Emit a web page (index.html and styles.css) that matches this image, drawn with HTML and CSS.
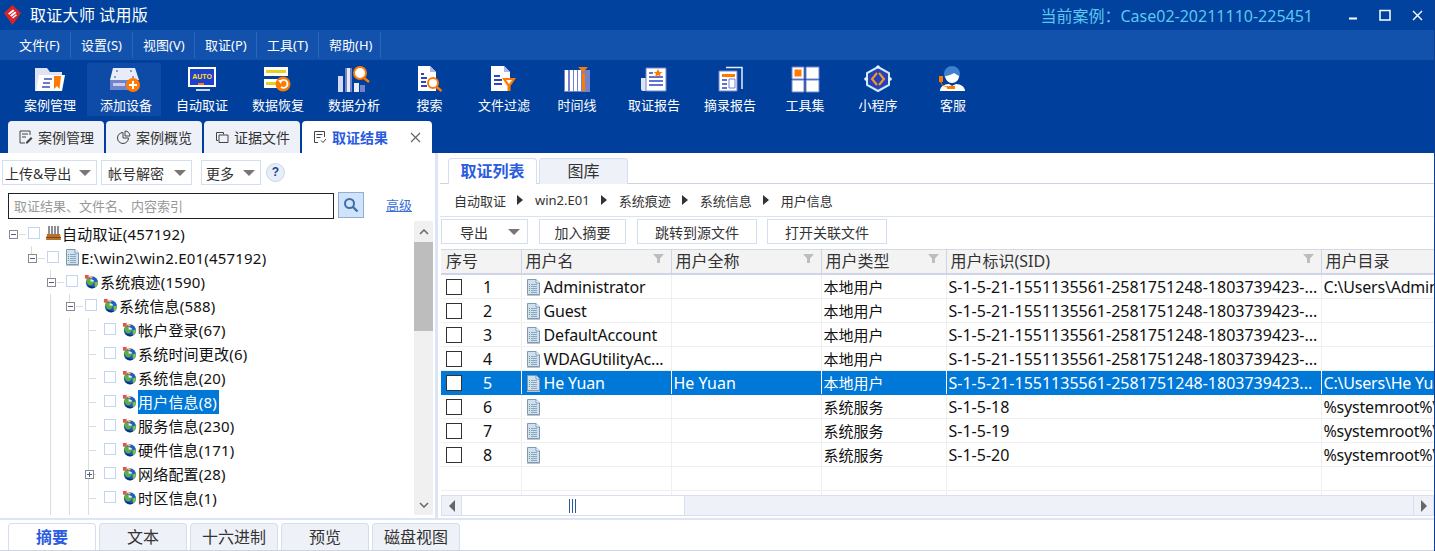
FILE: index.html
```html
<!DOCTYPE html>
<html lang="zh-CN">
<head>
<meta charset="utf-8">
<title>取证大师 试用版</title>
<link rel="stylesheet" href="styles.css">
</head>
<body>
<svg class="defs" width="0" height="0" aria-hidden="true">
  <symbol id="doc" viewBox="0 0 15 18">
    <path d="M1.5 1.5h8.5l3.5 3.5v11.500h-12z" fill="#cfe0ee" stroke="#7f99b4"/>
    <path d="M10 1.500v3.500h3.500" fill="#fff" stroke="#7f99b4"/>
    <path d="M5 6.500h6M5 8.500h6M5 10.500h6M5 12.500h6M5 14.500h6" stroke="#8aa6c0"/>
    <path d="M3 6.500h1M3 8.500h1M3 10.500h1M3 12.500h1" stroke="#5aa86a"/>
    <path d="M1 17.500h13" stroke="#c5c5c5"/>
  </symbol>
  <symbol id="globe" viewBox="0 0 16 16">
    <circle cx="8.500" cy="9" r="6.500" fill="#1f5fc4"/>
    <path d="M4 4.500c3 0 5 1 6 3s-1 4-3 4.500-3-2-4-3-1-3 1-4.500z" fill="#5fb03a"/>
    <path d="M11 9l3.500-1 .5 3-3 3z" fill="#7cc242"/>
    <path d="M3 12a7 7 0 0 0 9 2.500l-2-1z" fill="#0e2f70"/>
    <path d="M1 1h4v4H1z" fill="#e2574c"/>
    <path d="M6 2h3v2.500H6z" fill="#f4b183"/>
    <path d="M7 5.500c2 .5 4 1 4 2.500H7z" fill="#e6f0fa"/>
  </symbol>
  <symbol id="funnel" viewBox="0 0 11 9">
    <path d="M0 0h11L7 4.500V9H4V4.500z" fill="#bdbdbd"/>
  </symbol>
</svg>

<header class="titlebar">
  <svg class="logo" width="17" height="20" viewBox="0 0 17 20"><path d="M8.500 0l8.500 8-8.500 12L0 8z" fill="#d8232a"/><path d="M4 8.500l5-4 1.500 1.200-5 4zM6 10.500l5-4 1.500 1.200-5 4zM8 12.500l4-3.200 1 1-4 3.200z" fill="#fff"/></svg>
  <span class="app-name">取证大师 试用版</span>
  <span class="case-name">当前案例：Case02-20211110-225451</span>
  <div class="win-controls">
    <svg width="9" height="10" viewBox="0 0 9 10"><path d="M0 8.500h8" stroke="#fff" stroke-width="2"/></svg>
    <svg width="12" height="12" viewBox="0 0 12 12"><path d="M1 1.500h10v9.500H1z" fill="none" stroke="#fff" stroke-width="1.500"/></svg>
    <svg width="11" height="11" viewBox="0 0 11 11"><path d="M1 1l9 9M10 1l-9 9" stroke="#fff" stroke-width="1.400"/></svg>
  </div>
</header>

<nav class="menubar">
  <span class="menu-item">文件(F)</span><span class="menu-item">设置(S)</span><span class="menu-item">视图(V)</span><span class="menu-item">取证(P)</span><span class="menu-item">工具(T)</span><span class="menu-item">帮助(H)</span>
</nav>

<div class="toolbar">
  <div class="tool">
    <svg width="32" height="28" viewBox="0 0 32 28"><path d="M1 3h12l3 4h12v3H8L5 26H1z" fill="#dfe3f5"/><path d="M5 10h26l-3 16H2z" fill="#fff"/><path d="M10 14h8M9 18h7M8 22h8" stroke="#3f51b5" stroke-width="1.600"/><path d="M20 11h7l-1.500 13-2.500-3-3 3z" fill="#ff7a00"/></svg>
    <span>案例管理</span>
  </div>
  <div class="tool active">
    <svg width="32" height="28" viewBox="0 0 32 28"><path d="M3 3h22l4 12H0z" fill="#e8ebf8"/><path d="M0 15h26v10H0z" fill="#7283cc"/><path d="M3 18h12v3H3z" fill="#c7cff0"/><circle cx="7" cy="6" r="1" fill="#6f80c8"/><circle cx="21" cy="6" r="1" fill="#6f80c8"/><circle cx="5" cy="12" r="1" fill="#6f80c8"/><circle cx="23" cy="12" r="1" fill="#6f80c8"/><circle cx="23" cy="20" r="7" fill="#ff7a00"/><path d="M19 20h8M23 16v8" stroke="#fff" stroke-width="2"/></svg>
    <span>添加设备</span>
  </div>
  <div class="tool">
    <svg width="32" height="28" viewBox="0 0 32 28"><path d="M2 2h28v20H2z" fill="#fff"/><path d="M4 4h24v16H4z" fill="#1e3fd0"/><text x="16" y="13.500" class="auto">AUTO</text><path d="M12 18h6v2h-6z" fill="#ff7a00"/><path d="M10 24h14v2H10z" fill="#cfd6f2"/></svg>
    <span>自动取证</span>
  </div>
  <div class="tool">
    <svg width="32" height="28" viewBox="0 0 32 28"><path d="M2 2h24v9H2zM2 14h18v9H2z" fill="#fff"/><path d="M4 5h20v3H4zM4 17h14v3H4z" fill="#e6d21c"/><circle cx="21" cy="19" r="7.500" fill="#ff7a00"/><path d="M18 17a4 4 0 1 1 1 5" fill="none" stroke="#fff" stroke-width="1.800"/><path d="M16 15l4 0-1 4z" fill="#fff"/></svg>
    <span>数据恢复</span>
  </div>
  <div class="tool">
    <svg width="32" height="28" viewBox="0 0 32 28"><path d="M0 11h5v16H0z" fill="#d4d9f3"/><path d="M7 3h7v24H7z" fill="#7283cc"/><path d="M9 3h3v24H9z" fill="#e8ebf8"/><path d="M16 18h5v9h-5z" fill="#e8ebf8"/><path d="M22 20h5v7h-5z" fill="#7283cc"/><circle cx="22" cy="8" r="6" fill="#fff" stroke="#ff7a00" stroke-width="2"/><path d="M26 13l5 4" stroke="#ff7a00" stroke-width="2.400"/></svg>
    <span>数据分析</span>
  </div>
  <div class="tool">
    <svg width="32" height="28" viewBox="0 0 32 28"><path d="M4 1h12l6 6v19H4z" fill="#fff"/><path d="M16 1v6h6z" fill="#aeb8e6"/><path d="M7 9h3M7 13h6M7 17h5M7 21h6" stroke="#2f45c4" stroke-width="1.800"/><circle cx="19" cy="18" r="5" fill="#fff" stroke="#ff7a00" stroke-width="2"/><path d="M22.500 22l5 4" stroke="#ff7a00" stroke-width="2.400"/></svg>
    <span>搜索</span>
  </div>
  <div class="tool">
    <svg width="32" height="28" viewBox="0 0 32 28"><path d="M3 1h13l6 6v19H3z" fill="#fff"/><path d="M16 1v6h6z" fill="#aeb8e6"/><path d="M6 11h6M6 15h8M6 19h8" stroke="#2f45c4" stroke-width="1.800"/><path d="M14 13h14l-5.500 8v5h-3v-5z" fill="#ff7a00"/><path d="M18 15h6l-3 4z" fill="#fff"/></svg>
    <span>文件过滤</span>
  </div>
  <div class="tool">
    <svg width="32" height="28" viewBox="0 0 32 28"><path d="M3 5h26v22H3z" fill="#7283cc"/><path d="M4 5h3v21H4zM9 5h3v21H9zM13 5h3v21h-3zM17 5h3v21h-3z" fill="#fff"/><path d="M21 8h3v18h-3z" fill="#ff7a00"/><path d="M17 2h10l-5 5z" fill="#ff7a00"/></svg>
    <span>时间线</span>
  </div>
  <div class="tool">
    <svg width="32" height="28" viewBox="0 0 32 28"><path d="M3 13h6v13H5a2 2 0 0 1-2-2z" fill="#dfe3f5"/><path d="M8 3h20v23H8z" fill="#fff" stroke="#7283cc"/><path d="M11 8h4M11 12h14M11 16h14M11 20h14" stroke="#2f45c4" stroke-width="1.600"/><path d="M20 4l1.500 3h3l-2.500 2 1 3-3-2-3 2 1-3-2.500-2h3z" fill="#ff7a00"/></svg>
    <span>取证报告</span>
  </div>
  <div class="tool">
    <svg width="32" height="28" viewBox="0 0 32 28"><path d="M12 2.500h16V24" fill="none" stroke="#e8ebf8" stroke-width="1.500"/><path d="M5 6h18v20H5z" fill="#fff" stroke="#7283cc"/><path d="M8 9h13v3H8z" fill="#ff7a00"/><path d="M15 14h6v9h-6z" fill="#fff" stroke="#7283cc"/><path d="M8 15h5M8 19h5M8 23h5" stroke="#2f45c4" stroke-width="1.600"/></svg>
    <span>摘录报告</span>
  </div>
  <div class="tool">
    <svg width="32" height="28" viewBox="0 0 32 28"><path d="M3 2h12v12H3zM17 2h13v12H17zM3 15h12v12H3zM17 15h13v12H17z" fill="#fff" stroke="#7283cc"/><path d="M5.500 4.500h7v7h-7z" fill="#ff7a00"/></svg>
    <span>工具集</span>
  </div>
  <div class="tool">
    <svg width="32" height="28" viewBox="0 0 32 28"><path d="M16 2l11 6v12l-11 6-11-6V8z" fill="#2a3fb8" stroke="#cdeefa" stroke-width="2"/><circle cx="16" cy="1.800" r="1.600" fill="#e8f8ff"/><circle cx="4" cy="14" r="1.800" fill="#e8f8ff"/><circle cx="28" cy="14" r="1.800" fill="#e8f8ff"/><path d="M15 8l-5 6 5 6M17 8l5 6-5 6" fill="none" stroke="#f0a020" stroke-width="2"/></svg>
    <span>小程序</span>
  </div>
  <div class="tool">
    <svg width="32" height="28" viewBox="0 0 32 28"><circle cx="15" cy="9" r="8" fill="#3e7fcf"/><path d="M8 11c3 0 7-2 9-3l5 3c0 4-3 7-7 7s-6-3-7-7z" fill="#fff"/><path d="M3 26c0-4 4-7 9-7l3 2 4-2c5 0 9 3 9 7z" fill="#fff"/><path d="M2 11h4v6H2z" fill="#ff7a00"/><path d="M4 17c0 3 3 4 6 5" fill="none" stroke="#ff7a00"/><path d="M10 21h8v3h-8z" fill="#ff7a00"/></svg>
    <span>客服</span>
  </div>
</div>

<div class="tabs-top">
  <div class="top-tab">
    <svg width="14" height="14" viewBox="0 0 14 14"><path d="M11 5V1H1v12h5M3 4h6M3 7h4" fill="none" stroke="#444"/><path d="M7 12l5-5 1.500 1.500-5 5H7z" fill="#444"/></svg>
    <span>案例管理</span>
  </div>
  <div class="top-tab">
    <svg width="14" height="14" viewBox="0 0 14 14"><path d="M6 2.500a5.500 5.500 0 1 0 5.500 5.500H6z" fill="none" stroke="#444"/><path d="M8 1a5 5 0 0 1 5 5H8z" fill="none" stroke="#444"/></svg>
    <span>案例概览</span>
  </div>
  <div class="top-tab">
    <svg width="14" height="14" viewBox="0 0 14 14"><path d="M3 10.500H1.500v-8h7v2" fill="none" stroke="#444"/><path d="M4 5h9v7.500H4z" fill="none" stroke="#444"/></svg>
    <span>证据文件</span>
  </div>
  <div class="top-tab current">
    <svg width="14" height="14" viewBox="0 0 14 14"><path d="M5 12.500H1.500v-11h10V7M3.500 4.500h6M3.500 7.500h4" fill="none" stroke="#444"/><path d="M8 10.500l2 2 3-3.500" fill="none" stroke="#444"/></svg>
    <span class="tab-strong">取证结果</span>
    <svg class="tab-close" width="11" height="11" viewBox="0 0 11 11"><path d="M1 1l9 9M10 1l-9 9" stroke="#666" stroke-width="1.200"/></svg>
  </div>
</div>

<main class="workspace">
  <section class="left">
    <div class="left-tools">
      <button class="dd dd-upload"><span>上传&amp;导出</span><i class="caret"></i></button>
      <button class="dd dd-account"><span>帐号解密</span><i class="caret"></i></button>
      <button class="dd dd-more"><span>更多</span><i class="caret"></i></button>
      <span class="help">?</span>
    </div>
    <div class="search-row">
      <div class="search-box">取证结果、文件名、内容索引</div>
      <div class="search-btn"><svg width="16" height="16" viewBox="0 0 16 16"><circle cx="6.500" cy="6.500" r="4.500" fill="none" stroke="#3f6ea8" stroke-width="2"/><path d="M10 10l4.500 4.500" stroke="#3f6ea8" stroke-width="2.400"/></svg></div>
      <a class="adv">高级</a>
    </div>
    <div class="tree-wrap">
      <div class="tree">
        <div class="row lv0"><i class="exp"></i><i class="cb"></i><svg class="ico" width="15" height="16" viewBox="0 0 15 16"><path d="M2 1h2v9H2zM5 1h2v9H5zM8 1h2v9H8zM11 1h2v9h-2z" fill="#8c8f96"/><path d="M1 9h13l1 6H0z" fill="#b4702c"/><path d="M0 12h15v1H0z" fill="#7c4a18"/></svg><span class="lbl">自动取证(457192)</span></div>
        <div class="row lv1"><i class="exp"></i><i class="cb"></i><svg class="ico" width="15" height="18"><use href="#doc"/></svg><span class="lbl">E:\win2\win2.E01(457192)</span></div>
        <div class="row lv2"><i class="exp"></i><i class="cb"></i><svg class="ico" width="15" height="15"><use href="#globe"/></svg><span class="lbl">系统痕迹(1590)</span></div>
        <div class="row lv3"><i class="exp"></i><i class="cb"></i><svg class="ico" width="15" height="15"><use href="#globe"/></svg><span class="lbl">系统信息(588)</span></div>
        <div class="row lv4"><i class="noexp"></i><i class="cb"></i><svg class="ico" width="15" height="15"><use href="#globe"/></svg><span class="lbl">帐户登录(67)</span></div>
        <div class="row lv4"><i class="noexp"></i><i class="cb"></i><svg class="ico" width="15" height="15"><use href="#globe"/></svg><span class="lbl">系统时间更改(6)</span></div>
        <div class="row lv4"><i class="noexp"></i><i class="cb"></i><svg class="ico" width="15" height="15"><use href="#globe"/></svg><span class="lbl">系统信息(20)</span></div>
        <div class="row lv4"><i class="noexp"></i><i class="cb"></i><svg class="ico" width="15" height="15"><use href="#globe"/></svg><span class="lbl picked">用户信息(8)</span></div>
        <div class="row lv4"><i class="noexp"></i><i class="cb"></i><svg class="ico" width="15" height="15"><use href="#globe"/></svg><span class="lbl">服务信息(230)</span></div>
        <div class="row lv4"><i class="noexp"></i><i class="cb"></i><svg class="ico" width="15" height="15"><use href="#globe"/></svg><span class="lbl">硬件信息(171)</span></div>
        <div class="row lv4"><i class="exp plus"></i><i class="cb"></i><svg class="ico" width="15" height="15"><use href="#globe"/></svg><span class="lbl">网络配置(28)</span></div>
        <div class="row lv4"><i class="noexp"></i><i class="cb"></i><svg class="ico" width="15" height="15"><use href="#globe"/></svg><span class="lbl">时区信息(1)</span></div>
        <div class="row lv4"><i class="noexp"></i><i class="cb"></i><svg class="ico" width="15" height="15"><use href="#globe"/></svg></div>
      </div>
      <div class="vscroll">
        <div class="vbtn"><svg width="10" height="6" viewBox="0 0 10 6"><path d="M1 5l4-4 4 4" fill="none" stroke="#666" stroke-width="1.500"/></svg></div>
        <div class="vthumb"></div>
        <div class="vrest"></div>
        <div class="vbtn"><svg width="10" height="6" viewBox="0 0 10 6"><path d="M1 1l4 4 4-4" fill="none" stroke="#666" stroke-width="1.500"/></svg></div>
      </div>
    </div>
  </section>

  <div class="splitter"></div>

  <section class="right">
    <div class="right-tabs">
      <div class="rtab current">取证列表</div>
      <div class="rtab">图库</div>
    </div>
    <div class="crumbs">
      <span>自动取证</span><i class="sep"></i><span>win2.E01</span><i class="sep"></i><span>系统痕迹</span><i class="sep"></i><span>系统信息</span><i class="sep"></i><span>用户信息</span>
    </div>
    <div class="actions">
      <button class="act act-export"><span>导出</span><i class="caret"></i></button>
      <button class="act act-add">加入摘要</button>
      <button class="act act-jump">跳转到源文件</button>
      <button class="act act-open">打开关联文件</button>
    </div>
    <div class="table-wrap">
      <table class="grid">
        <colgroup><col class="c1"><col class="c2"><col class="c3"><col class="c4"><col class="c5"><col class="c6"></colgroup>
        <thead>
          <tr>
            <th class="th-first">序号</th>
            <th><div class="th"><span>用户名</span><svg width="11" height="9"><use href="#funnel"/></svg></div></th>
            <th><div class="th"><span>用户全称</span><svg width="11" height="9"><use href="#funnel"/></svg></div></th>
            <th><div class="th"><span>用户类型</span><svg width="11" height="9"><use href="#funnel"/></svg></div></th>
            <th><div class="th"><span>用户标识(SID)</span><svg width="11" height="9"><use href="#funnel"/></svg></div></th>
            <th>用户目录</th>
          </tr>
        </thead>
        <tbody>
          <tr><td><div class="idx"><i class="box"></i><span>1</span></div></td><td><div class="name"><svg width="15" height="18"><use href="#doc"/></svg><span>Administrator</span></div></td><td></td><td>本地用户</td><td class="lat">S-1-5-21-1551135561-2581751248-1803739423-...</td><td class="lat dir">C:\Users\Administrator</td></tr>
          <tr><td><div class="idx"><i class="box"></i><span>2</span></div></td><td><div class="name"><svg width="15" height="18"><use href="#doc"/></svg><span>Guest</span></div></td><td></td><td>本地用户</td><td class="lat">S-1-5-21-1551135561-2581751248-1803739423-...</td><td></td></tr>
          <tr><td><div class="idx"><i class="box"></i><span>3</span></div></td><td><div class="name"><svg width="15" height="18"><use href="#doc"/></svg><span>DefaultAccount</span></div></td><td></td><td>本地用户</td><td class="lat">S-1-5-21-1551135561-2581751248-1803739423-...</td><td></td></tr>
          <tr><td><div class="idx"><i class="box"></i><span>4</span></div></td><td><div class="name"><svg width="15" height="18"><use href="#doc"/></svg><span>WDAGUtilityAc...</span></div></td><td></td><td>本地用户</td><td class="lat">S-1-5-21-1551135561-2581751248-1803739423-...</td><td></td></tr>
          <tr class="sel"><td><div class="idx"><i class="box"></i><span>5</span></div></td><td><div class="name"><svg width="15" height="18"><use href="#doc"/></svg><span>He Yuan</span></div></td><td class="lat">He Yuan</td><td>本地用户</td><td class="lat">S-1-5-21-1551135561-2581751248-1803739423...</td><td class="lat dir">C:\Users\He Yuan</td></tr>
          <tr><td><div class="idx"><i class="box"></i><span>6</span></div></td><td><div class="name"><svg width="15" height="18"><use href="#doc"/></svg></div></td><td></td><td>系统服务</td><td class="lat">S-1-5-18</td><td class="lat dir">%systemroot%\system32</td></tr>
          <tr><td><div class="idx"><i class="box"></i><span>7</span></div></td><td><div class="name"><svg width="15" height="18"><use href="#doc"/></svg></div></td><td></td><td>系统服务</td><td class="lat">S-1-5-19</td><td class="lat dir">%systemroot%\system32</td></tr>
          <tr><td><div class="idx"><i class="box"></i><span>8</span></div></td><td><div class="name"><svg width="15" height="18"><use href="#doc"/></svg></div></td><td></td><td>系统服务</td><td class="lat">S-1-5-20</td><td class="lat dir">%systemroot%\system32</td></tr>
          <tr><td></td><td></td><td></td><td></td><td></td><td></td></tr>
          <tr><td></td><td></td><td></td><td></td><td></td><td></td></tr>
        </tbody>
      </table>
    </div>
    <div class="hscroll">
      <div class="hbtn"><i class="arrow-l"></i></div>
      <div class="hthumb"><i class="grip"></i></div>
      <div class="hrest"></div>
      <div class="hbtn"><i class="arrow-r"></i></div>
    </div>
  </section>
</main>

<div class="hline"></div>

<div class="tabs-bottom">
  <div class="btab current">摘要</div>
  <div class="btab">文本</div>
  <div class="btab">十六进制</div>
  <div class="btab">预览</div>
  <div class="btab">磁盘视图</div>
</div>
</body>
</html>
```

FILE: styles.css
```css
* { box-sizing: border-box; }
html, body { margin: 0; padding: 0; height: 100%; overflow: hidden; }
body {
  width: 1435px;
  height: 551px;
  background: #fff;
  border-right: 1px solid #0d3f8f;
  font-family: "Noto Sans", "Noto Sans CJK SC", sans-serif;
  color: #111;
  display: flex;
  flex-direction: column;
}
.defs { display: block; height: 0; }
button { font: inherit; color: inherit; background: #fff; cursor: default; }
i { display: block; }

/* title bar */
.titlebar {
  height: 30px;
  flex: none;
  background: #00429e;
  display: flex;
  align-items: center;
  padding-left: 4px;
  color: #fff;
}
.logo { margin-right: 9px; }
.app-name { font-size: 16px; font-family: "Noto Sans CJK SC", sans-serif; letter-spacing: 0.3px; margin-bottom: 2px; }
.case-name {
  margin-left: auto;
  font-size: 16px;
  color: #5cc7f2;
  font-family: "Noto Sans", "Noto Sans CJK SC", sans-serif;
}
.win-controls {
  display: flex;
  align-items: center;
  gap: 21px;
  margin-left: 36px;
  margin-right: 11px;
}

/* menu */
.menubar {
  height: 30px;
  flex: none;
  background: #1252ad;
  display: flex;
  align-items: center;
  padding-left: 9px;
  color: #fff;
  font-size: 13px;
}
.menu-item {
  height: 26px;
  line-height: 26px;
  padding: 0 10px 0 10px;
  width: 62px;
  white-space: nowrap;
  border-right: 1px solid #2a66bb;
}

/* big toolbar */
.toolbar {
  height: 61px;
  flex: none;
  background: #00409c;
  padding: 3px 0 0 12px;
  display: grid;
  grid-template-columns: 76px 76px 76px 76px 76px 75px 74px 72px 82px 70px 80px 66px 84px;
  align-content: start;
}
.tool {
  height: 53px;
  padding-top: 2px;
  display: flex;
  flex-direction: column;
  align-items: center;
  color: #fff;
  font-size: 13px;
  line-height: 18px;
}
.tool svg { display: block; margin-bottom: 3px; flex: none; }
.tool span { white-space: nowrap; }
.tool.active { background: #0e4ba6; margin: 0 3px 0 -1px; padding-left: 4px; }
.auto { font: bold 7px "Liberation Sans", sans-serif; fill: #ffe600; text-anchor: middle; }

/* main tabs */
.tabs-top {
  height: 32px;
  flex: none;
  background: #00409c;
  display: flex;
  gap: 2px;
  padding-left: 8px;
}
.top-tab {
  width: 96px;
  background: #eef1f7;
  border-radius: 4px 4px 0 0;
  display: flex;
  align-items: center;
  gap: 5px;
  padding-left: 11px;
  font-size: 14px;
  color: #333;
}
.top-tab svg { flex: none; }
.top-tab.current { width: 130px; background: #fff; padding-right: 11px; }
.tab-strong { color: #2a5be0; font-weight: 700; }
.tab-close { margin-left: auto; }

/* workspace */
.workspace {
  height: 365px;
  flex: none;
  display: flex;
}
.left { width: 435px; flex: none; display: flex; flex-direction: column; }
.splitter { width: 3px; flex: none; background: #dbe5f5; }
.right { flex: 1; min-width: 0; display: flex; flex-direction: column; padding-left: 2px; }

.left-tools {
  display: flex;
  align-items: center;
  height: 25px;
  margin-top: 7px;
  padding-left: 2px;
}
.dd {
  height: 25px;
  padding: 0 5px 0 2px;
  border: 1px solid #d3dff0;
  display: flex;
  align-items: center;
  justify-content: space-between;
  font-size: 14px;
  color: #333;
  white-space: nowrap;
}
.dd-upload { width: 95px; margin-right: 4px; }
.dd-account { width: 91px; margin-right: 9px; padding-left: 6px; }
.dd-more { width: 60px; margin-right: 5px; padding-left: 4px; }
.caret {
  width: 0; height: 0; flex: none;
  border-left: 6px solid transparent;
  border-right: 6px solid transparent;
  border-top: 6px solid #777;
}
.help {
  width: 19px; height: 19px;
  border-radius: 50%;
  border: 1px solid #cbd6e6;
  background: #e7eef8;
  color: #1d3f91;
  font: bold 12px/17px "Liberation Sans", sans-serif;
  text-align: center;
}
.search-row {
  height: 26px;
  margin-top: 7px;
  padding-left: 8px;
  display: flex;
  align-items: flex-start;
}
.search-box {
  width: 326px;
  height: 26px;
  margin-top: 1px;
  border: 1px solid #222;
  padding-left: 5px;
  font-size: 13px;
  line-height: 24px;
  color: #999;
  font-family: "Noto Sans CJK SC", sans-serif;
}
.search-btn {
  width: 26px;
  height: 26px;
  margin-left: 4px;
  background: #cfe3fa;
  border: 1px solid #8eaed4;
  display: flex;
  align-items: center;
  justify-content: center;
}
.adv {
  margin-left: 22px;
  font-size: 13px;
  line-height: 26px;
  color: #3a6fd6;
  text-decoration: underline;
}
.tree-wrap {
  margin-top: 3px;
  height: 294px;
  display: flex;
  overflow: hidden;
}
.tree { width: 414px; flex: none; overflow: hidden; padding-top: 1px; }
.row {
  height: 24px;
  display: flex;
  align-items: center;
  font-size: 15px;
  letter-spacing: 0.2px;
  white-space: nowrap;
  background-repeat: no-repeat;
}
.lv0 { padding-left: 8px; background-image: linear-gradient(#ddd,#ddd); background-size: 7px 1px; background-position: 19px 12px; }
.lv1 { padding-left: 27px; background-image: linear-gradient(#ddd,#ddd), linear-gradient(#ddd,#ddd); background-size: 1px 12px, 7px 1px; background-position: 31px 0, 38px 12px; }
.lv2 { padding-left: 46px; background-image: linear-gradient(#ddd,#ddd), linear-gradient(#ddd,#ddd); background-size: 1px 12px, 7px 1px; background-position: 50px 0, 57px 12px; }
.lv3 { padding-left: 65px; background-image: linear-gradient(#ddd,#ddd), linear-gradient(#ddd,#ddd), linear-gradient(#ddd,#ddd); background-size: 1px 24px, 1px 12px, 7px 1px; background-position: 50px 0, 69px 0, 76px 12px; }
.lv4 { padding-left: 84px; background-image: linear-gradient(#ddd,#ddd), linear-gradient(#ddd,#ddd), linear-gradient(#ddd,#ddd), linear-gradient(#ddd,#ddd); background-size: 1px 24px, 1px 24px, 1px 24px, 8px 1px; background-position: 50px 0, 69px 0, 88px 0, 88px 12px; }
.exp {
  width: 9px; height: 9px; flex: none;
  margin: 0 1px 0 1px;
  border: 1px solid #8a8a8a;
  background: linear-gradient(#46609c,#46609c) center / 5px 1px no-repeat #fff;
}
.exp.plus {
  background: linear-gradient(#46609c,#46609c) center / 5px 1px no-repeat,
              linear-gradient(#46609c,#46609c) center / 1px 5px no-repeat #fff;
}
.noexp { width: 11px; height: 9px; flex: none; }
.cb {
  width: 12px; height: 12px; flex: none;
  margin-left: 9px; margin-right: 6px;
  margin-top: -2px;
  border: 1px solid #c3d4f5;
  background: #fff;
}
.ico { flex: none; margin-right: 1px; margin-top: -2px; }
.lbl { height: 24px; line-height: 24px; }
.picked { background: #0078d7; color: #fff; padding-right: 2px; }
.vscroll { width: 19px; flex: none; background: #f0f0f0; display: flex; flex-direction: column; }
.vbtn { height: 21px; flex: none; display: flex; align-items: center; justify-content: center; }
.vthumb { height: 89px; flex: none; background: #bdbdbd; }
.vrest { flex: 1; }

/* right */
.right-tabs {
  height: 31px;
  flex: none;
  border-bottom: 1px solid #ccd3e3;
  padding: 5px 0 0 8px;
  display: flex;
  gap: 2px;
}
.rtab {
  width: 89px;
  height: 26px;
  border: 1px solid #d5deee;
  border-bottom: none;
  border-radius: 4px 4px 0 0;
  background: #eef1f7;
  text-align: center;
  font-size: 16px;
  line-height: 25px;
  color: #333;
}
.rtab.current { background: #fff; color: #2a5be0; font-weight: 700; height: 26px; }
.crumbs {
  height: 33px;
  flex: none;
  border-bottom: 1px solid #dbe2f0;
  display: flex;
  align-items: center;
  padding-left: 14px;
  font-size: 13px;
  color: #333;
}
.sep {
  width: 0; height: 0;
  margin: 0 12px 0 11px;
  border-top: 5px solid transparent;
  border-bottom: 5px solid transparent;
  border-left: 6px solid #333;
}
.actions {
  height: 25px;
  margin-top: 2px;
  flex: none;
  display: flex;
  padding-left: 1px;
}
.act {
  height: 25px;
  padding: 0;
  border: 1px solid #d3dff0;
  font-size: 14px;
  color: #333;
  white-space: nowrap;
}
.act-export { width: 87px; margin-right: 11px; display: flex; align-items: center; padding: 0 7px 0 18px; justify-content: space-between; }
.act-add { width: 87px; margin-right: 11px; }
.act-jump { width: 120px; margin-right: 10px; }
.act-open { width: 120px; }

.table-wrap { margin-top: 5px; height: 246px; margin-left: 1px; overflow: hidden; flex: none; }
.grid { border-collapse: collapse; table-layout: fixed; width: 1119px; font-size: 15px; }
.c1 { width: 80px; }
.c2, .c3 { width: 150px; }
.c4 { width: 125px; }
.c5 { width: 375px; }
.c6 { width: 239px; }
th {
  height: 24px;
  padding: 0 0 0 4px;
  font-weight: 400;
  font-size: 16px;
  line-height: 20px;
  text-align: left;
  background: #f3f3f3;
  color: #333;
  border-top: 1px solid #d5d9e6;
  border-bottom: 2px solid #cfd5e6;
  border-right: 1px solid #cfd5e6;
  white-space: nowrap;
}
th.th-first { padding-left: 5px; }
.th { display: flex; align-items: center; justify-content: space-between; padding-right: 7px; }
.th svg { margin-top: -6px; }
td {
  height: 24px;
  padding: 1px 0 0 2px;
  border-right: 1px solid #efefef;
  border-bottom: 1px solid #efefef;
  white-space: nowrap;
  overflow: hidden;
  color: #111;
}
.lat { font-size: 16px; }
.dir { letter-spacing: -0.2px; }
.idx { display: flex; align-items: center; padding-left: 3px; font-size: 16px; }
.idx span { width: 31px; margin-left: 10px; text-align: center; }
.box { width: 16px; height: 16px; border: 1.500px solid #333; background: #fff; flex: none; }
.name { display: flex; align-items: center; gap: 3px; padding-left: 2px; font-size: 16px; letter-spacing: -0.15px; }
.name svg { flex: none; }
.sel td { background: #0078d7; color: #fff; border-color: #fff; border-bottom-color: #0078d7; }

.hscroll {
  height: 21px;
  flex: none;
  margin-left: 1px;
  display: flex;
  background: #eef1f7;
  border-top: 1px solid #d8dfee;
  border-bottom: 1px solid #d8dfee;
}
.hbtn { width: 21px; flex: none; display: flex; align-items: center; justify-content: center; border: 1px solid #d8dfee; border-width: 0 1px; }
.arrow-l { border-top: 6px solid transparent; border-bottom: 6px solid transparent; border-right: 6px solid #666; }
.arrow-r { border-top: 6px solid transparent; border-bottom: 6px solid transparent; border-left: 6px solid #666; }
.hthumb { width: 223px; flex: none; background: #fff; border-right: 1px solid #d8dfee; display: flex; align-items: center; justify-content: center; }
.grip { width: 8px; height: 14px; background: repeating-linear-gradient(90deg, #2a5a9c 0 1px, transparent 1px 3px); }
.hrest { flex: 1; }

/* bottom */
.hline { height: 2px; flex: none; background: #dbe5f5; }
.tabs-bottom {
  height: 31px;
  flex: none;
  padding: 3px 0 0 8px;
  display: flex;
  gap: 3px;
  border-bottom: 1px solid #cfd3dd;
  margin-bottom: 1px;
}
.btab {
  width: 88px;
  border: 1px solid #d5deee;
  border-bottom: none;
  border-radius: 4px 4px 0 0;
  background: #eef1f7;
  text-align: center;
  font-size: 16px;
  line-height: 27px;
  color: #333;
}
.btab.current { background: #fff; color: #2a5be0; font-weight: 700; }
```
